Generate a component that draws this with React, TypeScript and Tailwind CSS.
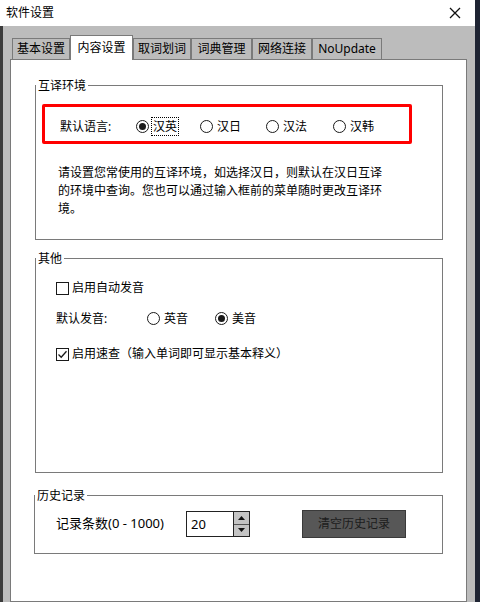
import type { ReactNode } from 'react';

const font = { fontFamily: '"Noto Sans", "Noto Sans CJK SC", sans-serif' };

function Radio({ checked, label, focus, width }: { checked?: boolean; label: string; focus?: boolean; width: string }) {
  return (
    <div className={`flex items-center ${width}`}>
      <span className="flex h-[13px] w-[13px] items-center justify-center rounded-full border border-[#1a1a1a] bg-white">
        {checked && <span className="h-[7px] w-[7px] rounded-full bg-[#1a1a1a]" />}
      </span>
      <span className={`ml-[2px] px-[1px] leading-[17px] ${focus ? 'border border-dotted border-black' : 'border border-transparent'}`}>{label}</span>
    </div>
  );
}

function Checkbox({ checked, label }: { checked?: boolean; label: string }) {
  return (
    <div className="flex items-center">
      <span className="flex h-[13px] w-[13px] items-center justify-center border border-[#1a1a1a] bg-white">
        {checked && (
          <svg width="11" height="11" viewBox="0 0 11 11">
            <path d="M1.5 5.5 L4.2 8.2 L9.5 2.2" fill="none" stroke="#1a1a1a" strokeWidth="1.3" />
          </svg>
        )}
      </span>
      <span className="ml-[3px] leading-[16px]">{label}</span>
    </div>
  );
}

function Group({ title, className, children }: { title: string; className: string; children?: ReactNode }) {
  return (
    <div className={`flex flex-col border border-[#7a7a7a] ${className}`}>
      <span className="-mt-[8px] w-fit bg-white px-[2px] leading-[16px]">{title}</span>
      {children}
    </div>
  );
}

const tabs = [
  { label: '基本设置', w: 'w-[58px]' },
  { label: '内容设置', w: 'w-[63px]', active: true },
  { label: '取词划词', w: 'w-[58px]' },
  { label: '词典管理', w: 'w-[61px]' },
  { label: '网络连接', w: 'w-[60px]' },
  { label: 'NoUpdate', w: 'w-[70px]' },
];

export default function App() {
  return (
    <div className="h-[602px] w-[480px] overflow-hidden bg-[#1f2433] text-[12px] text-black" style={font}>
      <div className="flex h-[602px] w-[475px] flex-col">
        <div className="flex h-[26px] shrink-0 items-center justify-between bg-white pl-[6px] pr-[14px]">
          <span className="text-[12px] leading-[16px] text-black">软件设置</span>
          <svg width="12" height="12" viewBox="0 0 12 12">
            <path d="M1 1 L11 11 M11 1 L1 11" stroke="#111" strokeWidth="1.3" />
          </svg>
        </div>
        <div className="flex flex-1 flex-col border-l-[3px] border-[#3b3b3b] bg-[#bcbcbc] pl-[7px] pt-[9px] pr-[8px]">
          <div className="relative z-10 flex h-[24px] items-end pl-[2px]">
            {tabs.map((t) =>
              t.active ? (
                <div key={t.label} className={`${t.w} -mb-[1px] flex h-[25px] items-center justify-center border border-b-0 border-[#7a7a7a] bg-white`}>
                  {t.label}
                </div>
              ) : (
                <div key={t.label} className={`${t.w} flex h-[21px] items-center justify-center border border-b-0 border-[#7a7a7a] bg-[#bcbcbc]`}>
                  {t.label}
                </div>
              )
            )}
          </div>
          <div className="flex flex-1 flex-col border border-[#7a7a7a] bg-white pl-[24px] pt-[25px]">
            <Group title="互译环境" className="h-[155px] w-[408px]">
              <div className="ml-[6px] mt-[10px] flex h-[40px] w-[370px] items-center rounded-[2px] border-[3px] border-[#ff0000] pl-[15px] pt-[5px]">
                <span className="w-[76px]">默认语言:</span>
                <Radio checked focus label="汉英" width="w-[64px]" />
                <Radio label="汉日" width="w-[66px]" />
                <Radio label="汉法" width="w-[67px]" />
                <Radio label="汉韩" width="w-[50px]" />
              </div>
              <p className="ml-[22px] mt-[20px] w-[326px] leading-[18px]">
                请设置您常使用的互译环境，如选择汉日，则默认在汉日互译的环境中查询。您也可以通过输入框前的菜单随时更改互译环境。
              </p>
            </Group>
            <Group title="其他" className="mt-[18px] h-[215px] w-[408px]">
              <div className="ml-[20px] mt-[13px]">
                <Checkbox label="启用自动发音" />
              </div>
              <div className="ml-[20px] mt-[13px] flex items-center">
                <span className="w-[91px]">默认发音:</span>
                <Radio label="英音" width="w-[68px]" />
                <Radio checked label="美音" width="w-[60px]" />
              </div>
              <div className="ml-[20px] mt-[18px]">
                <Checkbox checked label="启用速查（输入单词即可显示基本释义）" />
              </div>
            </Group>
            <Group title="历史记录" className="-ml-[1px] mt-[22px] h-[59px] w-[409px]">
              <div className="mt-[6px] flex items-center pl-[21px]">
                <span className="w-[130px] text-[13px]">记录条数(0 - 1000)</span>
                <div className="flex h-[26px] w-[64px] border border-[#222] bg-white">
                  <span className="flex-1 pl-[4px] text-[13px] leading-[24px]">20</span>
                  <div className="flex w-[16px] flex-col border-l border-[#222]">
                    <span className="flex flex-1 items-center justify-center border-b border-[#555] bg-[#c4c4c4]">
                      <svg width="7" height="4" viewBox="0 0 7 4"><path d="M0 4 L3.5 0 L7 4 Z" fill="#111" /></svg>
                    </span>
                    <span className="flex flex-1 items-center justify-center bg-[#c4c4c4]">
                      <svg width="7" height="4" viewBox="0 0 7 4"><path d="M0 0 L3.5 4 L7 0 Z" fill="#111" /></svg>
                    </span>
                  </div>
                </div>
                <button className="ml-[52px] h-[28px] w-[104px] border border-[#3a3a3a] bg-[#575757] text-[12px] text-[#1c1c1c]">
                  清空历史记录
                </button>
              </div>
            </Group>
          </div>
        </div>
      </div>
    </div>
  );
}
